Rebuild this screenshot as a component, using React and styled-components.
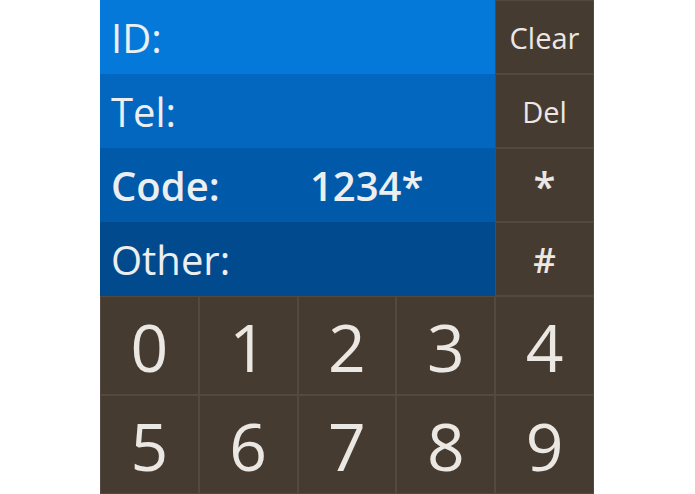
import React from 'react';
import styled, { createGlobalStyle } from 'styled-components';

const GlobalStyle = createGlobalStyle`
  html, body {
    margin: 0;
    padding: 0;
    background: #ffffff;
  }
  body {
    font-family: 'Open Sans', 'Noto Sans', sans-serif;
  }
`;

const fields = [
  { label: 'ID:', color: '#0479da' },
  { label: 'Tel:', color: '#0367c0' },
  { label: 'Code:', value: '1234*', color: '#0159a9', active: true },
  { label: 'Other:', color: '#014a8e' },
];

const sideKeys = [
  { text: 'Clear', size: 29 },
  { text: 'Del', size: 29 },
  { text: '*', size: 40, weight: 600 },
  { text: '#', size: 35, weight: 600 },
];

const digits = ['0', '1', '2', '3', '4', '5', '6', '7', '8', '9'];

class App extends React.Component {
  render() {
    return (
      <Page>
        <GlobalStyle />
        <Pad>
          <Top>
            <Fields>
              {fields.map((f) => (
                <Field key={f.label} color={f.color} active={f.active}>
                  <Label>{f.label}</Label>
                  {f.value && <Value>{f.value}</Value>}
                </Field>
              ))}
            </Fields>
            <Side>
              {sideKeys.map((k) => (
                <SideKey key={k.text} size={k.size} weight={k.weight}>
                  {k.text}
                </SideKey>
              ))}
            </Side>
          </Top>
          <Digits>
            {digits.map((d) => (
              <DigitKey key={d}>{d}</DigitKey>
            ))}
          </Digits>
        </Pad>
      </Page>
    );
  }
}

const Page = styled.div`
  display: flex;
  justify-content: center;
  width: 100%;
  height: 494px;
`;

const Pad = styled.div`
  width: 494px;
  height: 494px;
  margin-right: 1px;
  display: flex;
  flex-direction: column;
  background: #463b31;
`;

const Top = styled.div`
  display: flex;
  height: 296px;
`;

const Fields = styled.div`
  width: 395px;
  display: flex;
  flex-direction: column;
`;

const Field = styled.div.withConfig({
  shouldForwardProp: (p) => p !== 'active' && p !== 'color',
})`
  height: 74px;
  display: flex;
  align-items: center;
  padding-left: 11px;
  background: ${(p) => p.color};
  color: #eceef0;
  font-size: 40px;
  font-weight: ${(p) => (p.active ? 600 : 400)};
  box-sizing: border-box;
`;

const Label = styled.span`
  width: 199px;
`;

const Value = styled.span``;

const Side = styled.div`
  flex: 1;
  display: flex;
  flex-direction: column;
`;

const keyLines = `
  box-shadow: inset 1px 1px 0 #55493f, inset -1px -1px 0 #55493f;
`;

const SideKey = styled.div.withConfig({
  shouldForwardProp: (p) => p !== 'size' && p !== 'weight',
})`
  height: 74px;
  display: flex;
  align-items: center;
  justify-content: center;
  color: #ebe8e4;
  font-size: ${(p) => p.size}px;
  font-weight: ${(p) => p.weight || 400};
  ${keyLines}
`;

const Digits = styled.div`
  flex: 1;
  display: grid;
  grid-template-columns: repeat(5, 1fr);
  grid-template-rows: repeat(2, 1fr);
`;

const DigitKey = styled.div`
  display: flex;
  align-items: center;
  justify-content: center;
  color: #ebe8e4;
  font-size: 66px;
  ${keyLines}
`;

export default App;
